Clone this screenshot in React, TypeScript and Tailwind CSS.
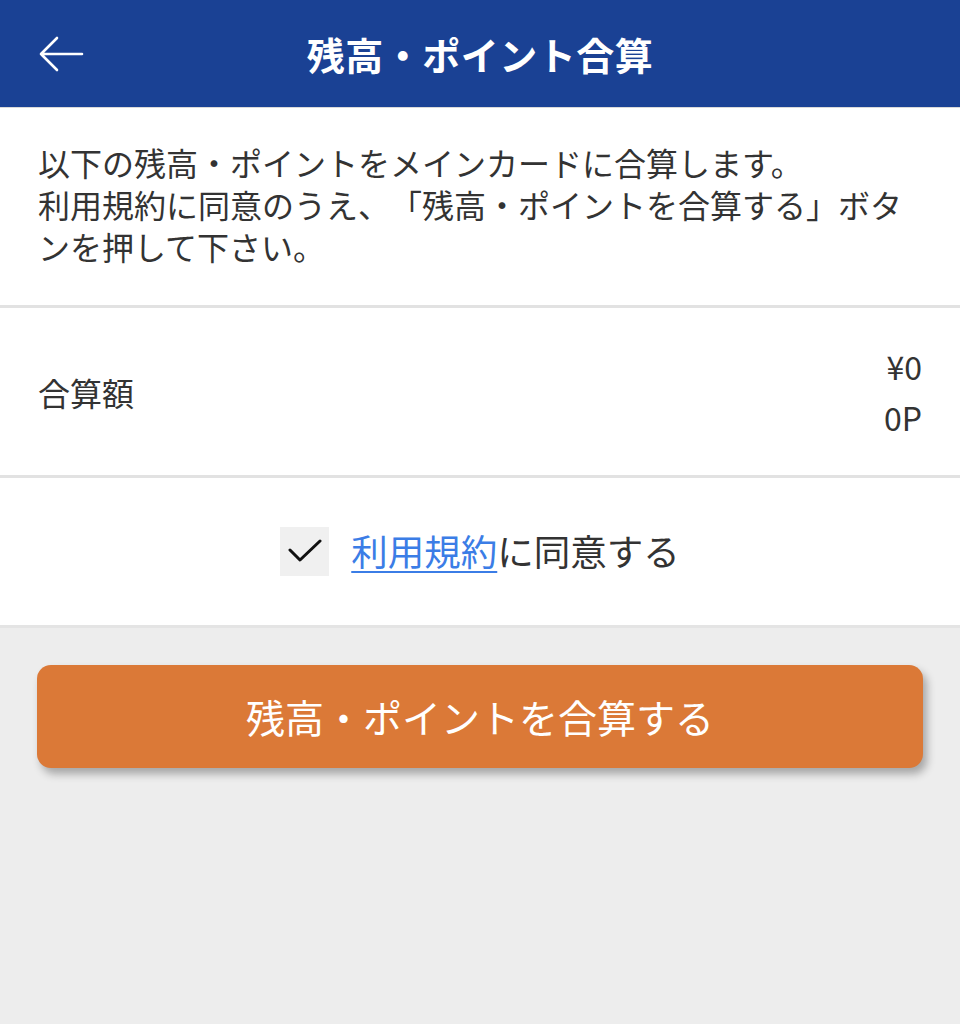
const font = {
  fontFamily: '"Noto Sans CJK JP", "Noto Sans", sans-serif',
};

const BackArrow = () => (
  <svg width="46" height="36" viewBox="0 0 46 36" fill="none">
    <path
      d="M44 18H3M19 2L3 18l16 16"
      stroke="white"
      strokeWidth="2.6"
      strokeLinecap="round"
      strokeLinejoin="round"
    />
  </svg>
);

const App = () => {
  return (
    <div
      className="min-h-[1024px] w-[960px] bg-[#ededed] text-[#333333] [text-spacing-trim:space-all]"
      style={font}
    >
      {/* Header */}
      <header className="relative flex h-[108px] items-center justify-center border-b border-[#d9d9d9] bg-[#1a4194]">
        <button className="absolute left-[38px] top-[36px] flex items-center">
          <BackArrow />
        </button>
        <h1 className="text-[38px] font-bold tracking-[0.5px] text-white">
          残高・ポイント合算
        </h1>
      </header>

      {/* Description */}
      <section className="border-b-[3px] border-[#e2e2e2] bg-white px-[38px] pt-[33px] pb-[38px] text-[32px] leading-[42px]">
        <p>以下の残高・ポイントをメインカードに合算します。</p>
        <p>
          利用規約に同意のうえ、「残高・ポイントを合算する」ボタンを押して下さい。
        </p>
      </section>

      {/* Amount */}
      <section className="flex h-[170px] items-center justify-between border-b-[3px] border-[#e2e2e2] bg-white px-[38px] text-[32px]">
        <span>合算額</span>
        <div className="flex flex-col items-end leading-[51px]">
          <span>¥0</span>
          <span>0P</span>
        </div>
      </section>

      {/* Agreement */}
      <section className="flex h-[150px] items-center justify-center gap-[22px] border-b-[3px] border-[#e4e4e4] bg-white">
        <div className="flex h-[49px] w-[49px] items-center justify-center bg-[#f0f0f0]">
          <svg width="34" height="26" viewBox="0 0 34 26" fill="none">
            <path
              d="M2 11l10 10L32 2"
              stroke="#111111"
              strokeWidth="3"
              strokeLinecap="round"
              strokeLinejoin="round"
            />
          </svg>
        </div>
        <p className="text-[36.5px] leading-none">
          <a className="text-[#3b7de6] underline underline-offset-[5px] decoration-[2px]">
            利用規約
          </a>
          に同意する
        </p>
      </section>

      {/* Button */}
      <div className="px-[37px] pt-[37px]">
        <button className="flex h-[103px] w-full items-center justify-center rounded-[14px] bg-[#db7937] text-[39px] text-white shadow-[4px_6px_8px_rgba(0,0,0,0.3)]">
          残高・ポイントを合算する
        </button>
      </div>
    </div>
  );
};

export default App;
